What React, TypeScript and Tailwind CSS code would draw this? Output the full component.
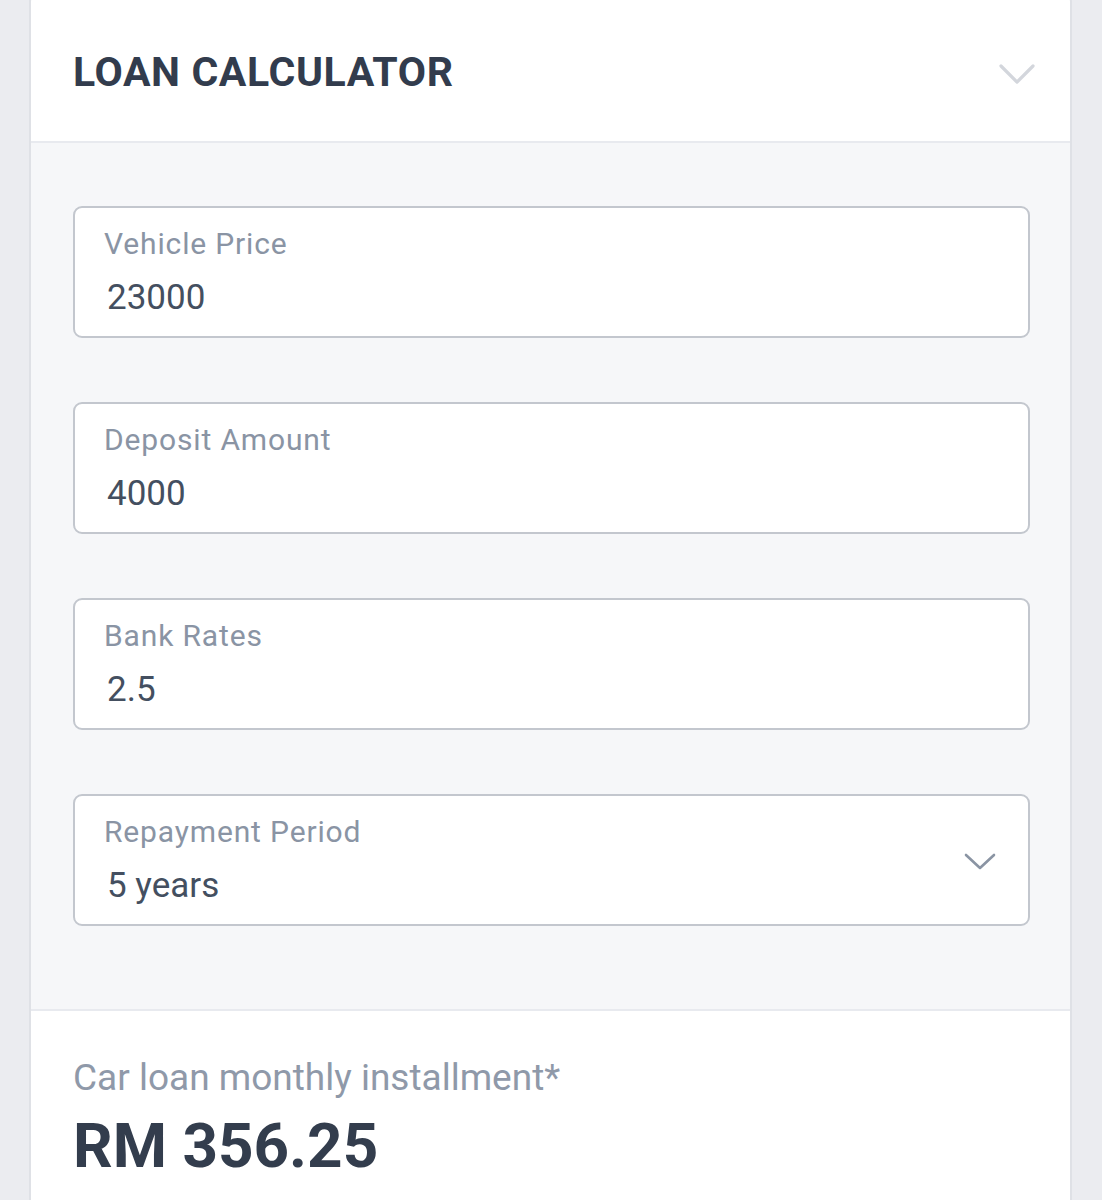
import React from "react";

function Field({ label, value, select }: { label: string; value: string; select?: boolean }) {
  return (
    <div className="relative flex h-[132px] flex-col rounded-[9px] border-2 border-[#c3c7ce] bg-white pl-[29px] pt-[18px]">
      <div className="text-[30px] leading-[36px] tracking-[0.85px] text-[#8a94a4]">{label}</div>
      <div className="mt-[16px] pl-[3px] text-[35px] leading-[40px] text-[#444f60]">{value}</div>
      {select && (
        <svg className="absolute right-[32px] top-[56px]" width="32" height="20" viewBox="0 0 32 20" fill="none">
          <path d="M2 3 L16 16 L30 3" stroke="#8a94a3" strokeWidth="2.6" strokeLinecap="round" strokeLinejoin="round" />
        </svg>
      )}
    </div>
  );
}

export default function App() {
  return (
    <div className="min-h-[1200px] overflow-hidden bg-[#ebecf0] pl-[29px] pr-[30px]" style={{ fontFamily: "Roboto, 'Liberation Sans', sans-serif" }}>
      <div className="-mt-[10px] overflow-hidden rounded-[12px] border-x-2 border-t-2 border-[#dfe1e6] bg-white">
        <div className="flex h-[151px] items-center justify-between border-b-2 border-[#e8eaef] pl-[42px] pr-[34px] pt-[12px]">
          <h1 className="text-[41px] font-bold leading-none tracking-[0.6px] text-[#323c4d]">LOAN CALCULATOR</h1>
          <svg width="38" height="24" viewBox="0 0 38 24" fill="none" className="mt-[2px]">
            <path d="M3 4 L19 20 L35 4" stroke="#d3d6dc" strokeWidth="3.2" strokeLinecap="round" strokeLinejoin="round" />
          </svg>
        </div>
        <div className="flex flex-col gap-[64px] border-b-2 border-[#e8eaef] bg-[#f6f7f9] pb-[83px] pl-[42px] pr-[40px] pt-[63px]">
          <Field label="Vehicle Price" value="23000" />
          <Field label="Deposit Amount" value="4000" />
          <Field label="Bank Rates" value="2.5" />
          <Field label="Repayment Period" value="5 years" select />
        </div>
        <div className="bg-white pb-[60px] pl-[42px] pt-[45px]">
          <div className="text-[37px] leading-[44px] text-[#8f99a9]">Car loan monthly installment*</div>
          <div className="mt-[13px] text-[62px] font-bold leading-[66px] text-[#333d4d]">RM 356.25</div>
        </div>
      </div>
    </div>
  );
}
